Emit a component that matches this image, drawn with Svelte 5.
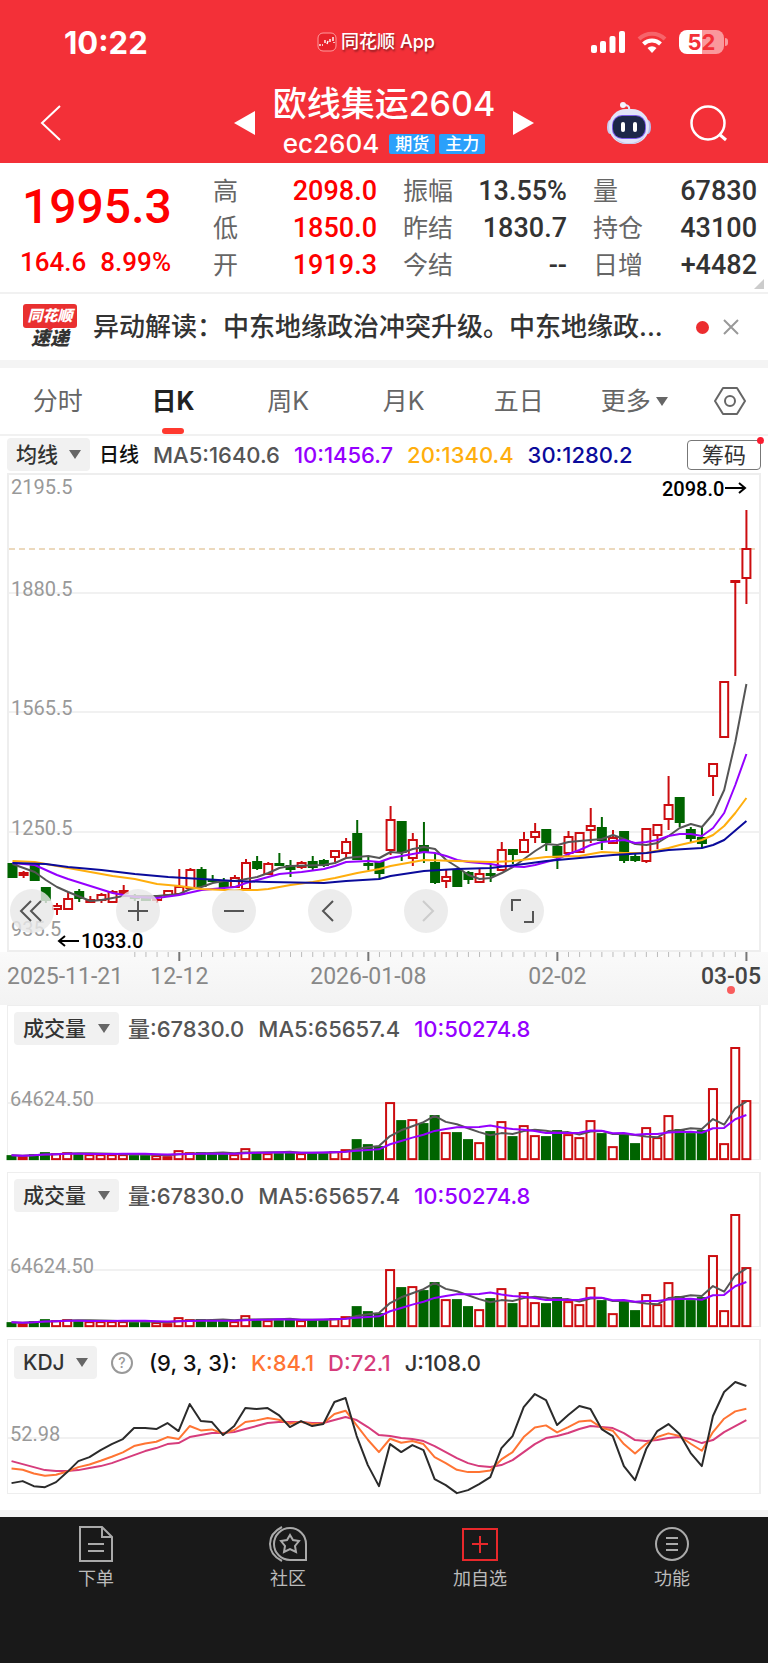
<script lang="ts">
	type Candle = [dir: 'u' | 'd', top: number, bottom: number, high: number, low: number];

	const step = 11.12;
	const x = (i: number) => 3.5 + i * step;

	// body top, body bottom, wick top, wick bottom
	const candles: Candle[] = [
		['d', 864, 877, 864, 878], ['u', 873, 875, 871, 878], ['d', 864, 880, 863, 881], ['d', 888, 900, 888, 903],
		['u', 906, 909, 903, 915], ['u', 899, 909, 892, 909], ['d', 892, 898, 889, 902], ['u', 900, 902, 896, 903],
		['u', 895, 900, 893, 903], ['u', 892, 902, 890, 902], ['u', 891, 893, 885, 894], ['d', 896, 898, 894, 901],
		['d', 897, 900, 896, 901], ['u', 897, 900, 895, 903], ['u', 891, 895, 891, 895], ['u', 887, 894, 869, 894],
		['u', 870, 888, 868, 888], ['d', 870, 886, 867, 887], ['d', 880, 881, 875, 882], ['d', 883, 887, 878, 889],
		['u', 878, 887, 875, 887], ['u', 863, 889, 859, 889], ['d', 862, 868, 856, 870], ['u', 864, 874, 862, 874],
		['d', 864, 865, 853, 866], ['d', 866, 869, 860, 877], ['u', 863, 867, 861, 869], ['d', 862, 867, 856, 870],
		['d', 861, 865, 859, 867], ['u', 851, 857, 851, 862], ['u', 842, 853, 838, 858], ['d', 834, 859, 820, 859],
		['d', 864, 865, 857, 870], ['d', 862, 873, 862, 879], ['u', 820, 850, 806, 855], ['d', 822, 852, 822, 861],
		['u', 840, 858, 833, 866], ['d', 846, 851, 822, 863], ['d', 863, 882, 853, 884], ['u', 877, 881, 869, 888],
		['d', 870, 886, 870, 886], ['d', 873, 879, 871, 884], ['u', 874, 882, 868, 883], ['d', 874, 875, 864, 882],
		['u', 850, 870, 842, 870], ['d', 850, 854, 850, 864], ['u', 840, 852, 832, 852], ['u', 832, 837, 823, 843],
		['d', 830, 842, 830, 851], ['d', 847, 857, 844, 869], ['u', 837, 853, 831, 857], ['u', 833, 852, 833, 852],
		['u', 826, 830, 808, 843], ['d', 828, 840, 817, 850], ['u', 838, 843, 830, 843], ['d', 832, 860, 832, 863],
		['d', 857, 860, 853, 862], ['u', 829, 861, 829, 863], ['u', 825, 835, 825, 849], ['u', 805, 819, 776, 830],
		['d', 798, 822, 798, 827], ['d', 830, 838, 827, 843], ['d', 838, 843, 826, 848], ['u', 764, 776, 764, 796],
		['u', 682, 737, 682, 737], ['u', 581, 582, 581, 676], ['u', 549, 578, 510, 604]
	];

	// [index, y] pairs, straight segments in between
	const averages: { color: string; points: number[][] }[] = [
		{
			color: '#555555',
			points: [[0, 864], [2, 872], [3, 880], [4, 887], [5, 892], [7, 901], [8, 900], [10, 896], [12, 896], [13, 896], [15, 894], [16, 889], [17, 887], [18, 883], [19, 881], [20, 881], [22, 877], [23, 873], [24, 868], [25, 866], [28, 865], [29, 863], [30, 858], [32, 856], [33, 858], [34, 852], [35, 853], [36, 849], [37, 847], [38, 849], [39, 860], [40, 867], [41, 875], [42, 879], [43, 878], [44, 873], [45, 867], [46, 859], [47, 851], [48, 844], [49, 845], [50, 842], [51, 841], [53, 839], [54, 835], [55, 839], [56, 844], [57, 845], [58, 843], [59, 836], [60, 828], [61, 824], [62, 827], [63, 814], [64, 790], [65, 742], [66, 684]]
		},
		{
			color: '#9500ff',
			points: [[0, 863], [2, 865], [4, 875], [5, 879], [7, 886], [9, 893], [11, 897], [13, 898], [15, 895], [17, 890], [20, 887], [21, 883], [23, 877], [24, 874], [26, 872], [28, 869], [29, 866], [30, 862], [32, 861], [33, 862], [34, 858], [35, 856], [37, 852], [38, 853], [39, 856], [40, 860], [41, 862], [43, 864], [44, 866], [46, 867], [47, 865], [48, 862], [49, 859], [50, 854], [51, 850], [52, 845], [53, 842], [55, 840], [56, 843], [57, 842], [58, 840], [59, 836], [60, 834], [61, 834], [62, 836], [63, 828], [64, 813], [65, 785], [66, 754]]
		},
		{
			color: '#ffae0d',
			points: [[0, 861], [2, 862], [3, 864], [5, 868], [7, 872], [9, 876], [11, 879], [13, 884], [15, 886], [17, 889], [19, 890], [22, 890], [23, 889], [25, 885], [27, 882], [29, 878], [31, 873], [33, 869], [34, 866], [36, 862], [37, 860], [40, 861], [43, 862], [45, 861], [48, 857], [51, 856], [53, 852], [55, 853], [57, 853], [59, 848], [60, 845], [62, 840], [63, 835], [64, 826], [65, 813], [66, 798]]
		},
		{
			color: '#0b0b9b',
			points: [[0, 863], [3, 864], [5, 867], [8, 870], [11, 874], [14, 877], [17, 879], [20, 881], [23, 882], [28, 883], [30, 881], [33, 879], [34, 876], [37, 871], [40, 869], [43, 868], [46, 864], [48, 861], [51, 858], [54, 855], [57, 853], [59, 850], [62, 848], [63, 845], [64, 840], [66, 821]]
		}
	];

	const volumes = [
		5, 4, 6, 8, 7, 8, 6, 6, 6, 6, 6, 5, 5, 5, 4, 10, 8, 8, 6, 6, 6, 12, 8, 7, 7, 8, 7, 8, 7, 9, 11, 21, 16, 14,
		58, 40, 41, 37, 45, 28, 28, 21, 18, 29, 39, 24, 35, 25, 24, 30, 26, 23, 40, 27, 14, 27, 17, 33, 23, 45, 31,
		27, 30, 72, 17, 113, 60
	];

	const lineJ = [
		182, 180, 185, 186, 181, 171, 160, 156, 149, 143, 138, 127, 127, 128, 122, 130, 103, 120, 121, 134, 125, 107,
		108, 107, 114, 126, 120, 125, 123, 101, 97, 135, 164, 185, 143, 151, 144, 149, 178, 184, 192, 189, 183, 176,
		147, 135, 106, 93, 99, 124, 114, 105, 108, 128, 135, 165, 179, 148, 130, 123, 133, 152, 165, 115, 91, 81, 85
	];
	const lineD = [
		160, 163, 166, 169, 170, 170, 169, 167, 165, 162, 158, 154, 150, 147, 143, 142, 136, 134, 132, 132, 131, 128,
		125, 122, 121, 121, 121, 122, 122, 119, 116, 119, 126, 134, 135, 137, 138, 140, 145, 151, 157, 162, 165, 166,
		164, 159, 151, 143, 137, 135, 132, 128, 125, 126, 127, 132, 139, 140, 139, 137, 136, 138, 142, 139, 131, 125, 119
	];
	// J = 3K - 2D
	const lineK = lineJ.map((j, i) => (j + 2 * lineD[i]) / 3);

	const toPoints = (pairs: number[][]) => pairs.map(([i, y]) => `${x(i)},${y}`).join(' ');
	const series = (values: number[]) => toPoints(values.map((v, i) => [i, v]));

	function movingAverage(values: number[], n: number): number[] {
		return values.map((_, i) => {
			const part = values.slice(Math.max(0, i - n + 1), i + 1);
			return part.reduce((a, b) => a + b, 0) / part.length;
		});
	}

	const volumeMa5 = series(movingAverage(volumes, 5).map((v) => 114 - v));
	const volumeMa10 = series(movingAverage(volumes, 10).map((v) => 114 - v));

	const quotes = [
		[['高', '2098.0'], ['低', '1850.0'], ['开', '1919.3']],
		[['振幅', '13.55%'], ['昨结', '1830.7'], ['今结', '--']],
		[['量', '67830'], ['持仓', '43100'], ['日增', '+4482']]
	];

	const tabs = ['分时', '日K', '周K', '月K', '五日'];
	let activeTab = $state('日K');

	const ticks = Array.from({ length: 56 }, (_, k) => k + 11);
	const majorTicks = [15, 32, 49, 66];
</script>

<main>
	<header>
		<div class="status">
			<span class="time">10:22</span>
			<span class="app-name">
				<svg width="20" height="20" viewBox="0 0 20 20" aria-hidden="true">
					<rect x="1" y="1" width="18" height="18" rx="5" fill="#e8222b" stroke="#ff9a9c" />
					<path d="M3 14v-2M5 13h1M8 11V8M10 12l1-3M13 10V7M16 9V5M17 11v-1" stroke="#fff" stroke-width="1.4" fill="none" />
				</svg>
				同花顺 App
			</span>
			<div class="status-icons">
				<svg width="34" height="24" viewBox="0 0 34 24" fill="#fff" aria-hidden="true">
					<rect y="15" width="6" height="8" rx="2" />
					<rect x="9" y="11" width="6" height="12" rx="2" />
					<rect x="18.5" y="6" width="6" height="17" rx="2" />
					<rect x="28" y="1" width="6" height="22" rx="2" />
				</svg>
				<svg width="30" height="24" viewBox="0 0 30 24" fill="none" stroke="#fff" aria-hidden="true">
					<path d="M2 9a18.5 18.5 0 0 1 26 0" stroke-width="4" opacity=".25" />
					<path d="M6.5 14a12 12 0 0 1 17 0" stroke-width="4" />
					<path d="M15 23l-4.5-5a6.5 6.5 0 0 1 9 0z" fill="#fff" stroke="none" />
				</svg>
				<span class="battery"><b>5</b><b>2</b></span>
			</div>
		</div>
		<div class="title-bar">
			<button class="back" aria-label="返回">
				<svg width="22" height="38" viewBox="0 0 22 38" fill="none" stroke="#fff" stroke-width="2">
					<path d="M20 2L2 19l18 17" />
				</svg>
			</button>
			<div class="contract">
				<button aria-label="上一个">
					<svg width="21" height="24" viewBox="0 0 21 24" fill="#fff"><path d="M21 0v24L0 12z" /></svg>
				</button>
				<div class="names">
					<h1>欧线集运2604</h1>
					<div class="code">
						<span>ec2604</span>
						<span class="badge">期货</span>
						<span class="badge">主力</span>
					</div>
				</div>
				<button aria-label="下一个">
					<svg width="21" height="24" viewBox="0 0 21 24" fill="#fff"><path d="M0 0v24l21-12z" /></svg>
				</button>
			</div>
			<div class="actions">
				<button aria-label="助手">
					<svg width="46" height="44" viewBox="0 0 46 44">
						<path d="M23 9c1-4-2-5-5-5" fill="none" stroke="#e4e6fa" stroke-width="2" />
						<circle cx="17" cy="4" r="3" fill="#f4f4ff" />
						<ellipse cx="4" cy="26" rx="3" ry="7" fill="#c9cdf0" />
						<ellipse cx="42" cy="26" rx="3" ry="7" fill="#b9bcea" />
						<rect x="3" y="8" width="40" height="35" rx="17" fill="#e2e4f8" />
						<path d="M7 34c8 11 24 11 32 0-3 6-8 9-16 9s-13-3-16-9z" fill="#c3c6ea" />
						<rect x="6" y="14" width="34" height="24" rx="10" fill="#7a5be8" />
						<rect x="7" y="15" width="32" height="22" rx="9" fill="#1c2748" />
						<rect x="15" y="21" width="4" height="10" rx="2" fill="#fff" />
						<rect x="27" y="21" width="4" height="10" rx="2" fill="#fff" />
					</svg>
				</button>
				<button aria-label="搜索">
					<svg width="38" height="38" viewBox="0 0 38 38" fill="none" stroke="#fff" stroke-width="2.5">
						<circle cx="18" cy="19" r="16.5" />
						<path d="M29 30l7 6" stroke-width="3" />
					</svg>
				</button>
			</div>
		</div>
	</header>

	<section class="quote">
		<div class="last">
			<strong>1995.3</strong>
			<div><span>164.6</span><span>8.99%</span></div>
		</div>
		{#each quotes as column, c}
			<dl class:up={c === 0}>
				{#each column as [label, value]}
					<div>
						<dt>{label}</dt>
						<dd>{value}</dd>
					</div>
				{/each}
			</dl>
		{/each}
		<i class="corner"></i>
	</section>

	<section class="news">
		<div class="news-logo">
			<span class="tag">同花顺</span>
			<span class="sub">速递</span>
		</div>
		<a href="#news">异动解读：中东地缘政治冲突升级。中东地缘政...</a>
		<i class="dot"></i>
		<button aria-label="关闭">
			<svg width="16" height="16" viewBox="0 0 16 16" stroke="#999" stroke-width="2"><path d="M1 1l14 14M15 1L1 15" /></svg>
		</button>
	</section>

	<nav class="tabs">
		{#each tabs as tab}
			<button class:active={activeTab === tab} onclick={() => (activeTab = tab)}>{tab}</button>
		{/each}
		<button>更多<i class="caret"></i></button>
		<button class="settings" aria-label="设置">
			<svg width="32" height="30" viewBox="0 0 32 30" fill="none" stroke="#666" stroke-width="2">
				<path d="M9 2h14l8 13-8 13H9L1 15z" stroke-linejoin="round" />
				<circle cx="16" cy="15" r="5" />
			</svg>
		</button>
	</nav>

	<div class="legend">
		<label class="picker">
			<select aria-label="主图指标"><option>均线</option></select>
			<i class="caret"></i>
		</label>
		<b class="period">日线</b>
		<span>MA5:1640.6</span>
		<span class="purple">10:1456.7</span>
		<span class="orange">20:1340.4</span>
		<span class="navy">30:1280.2</span>
		<button class="chips">筹码</button>
	</div>

	<section class="panel">
		<svg viewBox="0 475 750 475" role="img" aria-label="日K">
			<g class="grid">
				<path d="M0 593h750M0 712h750M0 832h750" />
				<path class="last-line" d="M0 549h750" />
			</g>
			<g class="scale">
				<text x="2" y="494">2195.5</text>
				<text x="2" y="596">1880.5</text>
				<text x="2" y="715">1565.5</text>
				<text x="2" y="835">1250.5</text>
				<text x="2" y="936">935.5</text>
			</g>
			{#each candles as [dir, top, bottom, high, low], i}
				<g class={dir === 'u' ? 'rise' : 'fall'}>
					{#if high < top}<path d="M{x(i)} {high}V{top}" />{/if}
					{#if low > bottom}<path d="M{x(i)} {bottom}V{low}" />{/if}
					<rect x={x(i) - 4} y={top} width="8" height={bottom - top} />
				</g>
			{/each}
			{#each averages as { color, points }}
				<polyline points={toPoints(points)} stroke={color} />
			{/each}
			<g class="mark">
				<text x="653" y="496">2098.0</text>
				<path d="M716 488h20M730 483l6 5-6 5" />
				<text x="72" y="948">1033.0</text>
				<path d="M70 941H50M56 936l-6 5 6 5" />
			</g>
		</svg>
		<div class="tools">
			<button aria-label="最早">
				<svg viewBox="0 0 44 44"><path d="M31 12L21 22l10 10M21 12L11 22l10 10" /></svg>
			</button>
			<button aria-label="放大">
				<svg viewBox="0 0 44 44"><path d="M12 22h20M22 12v20" /></svg>
			</button>
			<button aria-label="缩小">
				<svg viewBox="0 0 44 44"><path d="M12 22h20" /></svg>
			</button>
			<button aria-label="左移">
				<svg viewBox="0 0 44 44"><path d="M25 12L15 22l10 10" /></svg>
			</button>
			<button aria-label="右移" disabled>
				<svg viewBox="0 0 44 44"><path d="M19 12l10 10-10 10" /></svg>
			</button>
			<button aria-label="全屏">
				<svg viewBox="0 0 44 44"><path d="M12 22V11h9M33 22v11h-9" /></svg>
			</button>
		</div>
	</section>

	<div class="axis">
		<svg viewBox="0 0 750 53" role="img" aria-label="日期">
			{#each ticks as i}
				<path class:major={majorTicks.includes(i)} d="M{x(i)} 0v{majorTicks.includes(i) ? 9 : 5}" />
			{/each}
			<text x="-2" y="32">2025-11-21</text>
			<text x={x(15)} y="32" text-anchor="middle">12-12</text>
			<text x={x(32)} y="32" text-anchor="middle">2026-01-08</text>
			<text x={x(49)} y="32" text-anchor="middle">02-02</text>
			<text class="current" x="752" y="32" text-anchor="end">03-05</text>
			<circle cx="722" cy="38" r="4" />
		</svg>
	</div>

	{#each [1, 2] as pane}
		<section class="panel sub-panel">
			<div class="legend">
				<label class="picker wide">
					<select aria-label="副图指标{pane}"><option>成交量</option></select>
					<i class="caret"></i>
				</label>
				<span>量:67830.0</span>
				<span>MA5:65657.4</span>
				<span class="purple">10:50274.8</span>
			</div>
			<svg viewBox="0 0 750 114" role="img" aria-label="成交量">
				<path class="grid" d="M0 57h750" />
				<text class="scale" x="2" y="60">64624.50</text>
				{#each volumes as v, i}
					<rect class={candles[i][0] === 'u' ? 'rise' : 'fall'} x={x(i) - 4} y={115 - v} width="8" height={v - 2} />
				{/each}
				<polyline points={volumeMa5} stroke="#555555" />
				<polyline points={volumeMa10} stroke="#9500ff" />
			</svg>
		</section>
	{/each}

	<section class="panel sub-panel">
		<div class="legend">
			<label class="picker">
				<select aria-label="副图指标3"><option>KDJ</option></select>
				<i class="caret"></i>
			</label>
			<button class="help" aria-label="说明">?</button>
			<b>(9, 3, 3):</b>
			<span class="k">K:84.1</span>
			<span class="d">D:72.1</span>
			<span class="j">J:108.0</span>
		</div>
		<svg viewBox="0 79 750 114" role="img" aria-label="KDJ">
			<path class="grid" d="M0 137h750" />
			<text class="scale" x="2" y="140">52.98</text>
			<polyline points={series(lineD)} stroke="#d63c7c" />
			<polyline points={series(lineK)} stroke="#ff7433" />
			<polyline points={series(lineJ)} stroke="#2b2b2b" />
		</svg>
	</section>

	<nav class="bottom">
		<a href="#order">
			<svg viewBox="0 0 40 36">
				<path d="M4 1h22l10 10v24H4zM26 1v10h10M12 18h16M12 25h16" />
			</svg>
			下单
		</a>
		<a href="#community">
			<svg viewBox="0 0 40 36">
				<path d="M22 2a16 16 0 0 1 16 16v16H22a16 16 0 0 1 0-32zM14 1C-2 9-2 27 14 35" />
				<path d="M22 9l3 5 6 1-4 5 1 6-6-3-6 3 1-6-4-5 6-1z" />
			</svg>
			社区
		</a>
		<a href="#watch" class="add">
			<svg viewBox="0 0 40 36"><path d="M3 3h34v31H3zM20 10v17M12 18h16" /></svg>
			加自选
		</a>
		<a href="#more">
			<svg viewBox="0 0 40 36">
				<circle cx="20" cy="18" r="16" />
				<path d="M14 12h12M14 18h12M14 24h12" />
			</svg>
			功能
		</a>
	</nav>
</main>

<style>
	:global(body) {
		margin: 0;
		background: #191919;
	}

	main {
		background: #fff;
		color: #333;
		font-family: Inter, 'Noto Sans CJK SC', sans-serif;
	}

	button,
	select {
		border: 0;
		padding: 0;
		background: none;
		color: inherit;
		font: inherit;
		cursor: pointer;
	}

	svg {
		display: block;
	}

	header {
		background: #f33038;
		color: #fff;
	}

	.status {
		display: grid;
		grid-template-columns: 1fr auto 1fr;
		align-items: center;
		height: 84px;
		padding: 0 44px 0 64px;
	}

	.time {
		font-size: 31px;
		font-weight: 700;
	}

	.app-name {
		display: flex;
		align-items: center;
		gap: 4px;
		margin-right: 36px;
		font-size: 18px;
		font-weight: 500;
		line-height: 24px;
		text-shadow: 1px 2px 2px rgba(0, 0, 0, 0.4);
	}

	.status-icons {
		display: flex;
		justify-content: flex-end;
		align-items: center;
		gap: 12px;
	}

	.battery {
		position: relative;
		display: flex;
		justify-content: center;
		width: 45px;
		height: 24px;
		border-radius: 8px;
		background: linear-gradient(90deg, #fff 52%, #fa989c 52%);
		color: #f33038;
		font-size: 22px;
		line-height: 24px;
	}

	.battery::after {
		content: '';
		position: absolute;
		top: 8px;
		right: -4px;
		width: 3px;
		height: 8px;
		border-radius: 0 4px 4px 0;
		background: #fa989c;
	}

	.title-bar {
		display: grid;
		grid-template-columns: 1fr auto 1fr;
		align-items: center;
		height: 74px;
		padding: 0 40px 5px;
	}

	.back {
		justify-self: start;
	}

	.contract {
		display: flex;
		align-items: center;
		gap: 18px;
	}

	.names {
		text-align: center;
	}

	h1 {
		margin: 0 0 2px;
		font-size: 34px;
		font-weight: 500;
		line-height: 40px;
		white-space: nowrap;
	}

	.code {
		display: flex;
		justify-content: center;
		align-items: center;
		gap: 4px;
		font-size: 26px;
		font-weight: 500;
		line-height: 36px;
	}

	.badge {
		padding: 0 6px;
		border-radius: 2px;
		background: #2ba0fb;
		font-size: 17px;
		line-height: 20px;
	}

	.code span:first-child {
		margin-right: 6px;
	}

	.actions {
		display: flex;
		justify-content: flex-end;
		align-items: center;
		gap: 38px;
	}

	.quote {
		position: relative;
		display: grid;
		grid-template-columns: 1fr repeat(3, 164px);
		column-gap: 26px;
		padding: 10px 11px 8px 20px;
		border-bottom: 2px solid #f1f1f1;
		font-family: Roboto, 'Noto Sans CJK SC', sans-serif;
	}

	.last {
		color: #fe0000;
		font-size: 26px;
		font-weight: 500;
		white-space: nowrap;
	}

	.last strong {
		display: block;
		font-size: 48px;
		font-weight: 500;
		line-height: 68px;
		padding-left: 2px;
	}

	.last div {
		display: flex;
		gap: 14px;
		line-height: 42px;
	}

	dl {
		margin: 0;
	}

	dl div {
		display: flex;
		justify-content: space-between;
		height: 37px;
		line-height: 37px;
	}

	dt {
		color: #666;
		font-size: 25px;
	}

	dd {
		margin: 0;
		font-size: 27px;
		font-weight: 500;
	}

	.up dd {
		color: #fe0000;
	}

	.corner {
		position: absolute;
		right: 4px;
		bottom: 3px;
		border: 5px solid transparent;
		border-right-color: #ccc;
		border-bottom-color: #ccc;
	}

	.news {
		display: flex;
		align-items: center;
		height: 66px;
		padding: 0 29px 0 23px;
		border-bottom: 8px solid #f4f4f4;
	}

	.news a {
		flex: 1;
		min-width: 0;
		margin-left: 16px;
		overflow: hidden;
		color: #333;
		font-size: 26px;
		font-weight: 500;
		line-height: 36px;
		white-space: nowrap;
		text-decoration: none;
	}

	.news-logo {
		display: flex;
		flex-direction: column;
		align-items: center;
		width: 54px;
		font-style: italic;
		font-weight: 900;
	}

	.tag {
		position: relative;
		width: 100%;
		border-radius: 3px;
		background: #e93030;
		color: #fff;
		font-size: 15px;
		line-height: 24px;
		text-align: center;
	}

	.tag::after {
		content: '';
		position: absolute;
		top: 23px;
		left: 23px;
		border: 4px solid transparent;
		border-top-color: #e93030;
	}

	.sub {
		font-size: 19px;
		line-height: 22px;
	}

	.dot {
		width: 13px;
		height: 13px;
		margin: 0 14px 0 12px;
		border-radius: 50%;
		background: #ec2d2f;
	}

	.tabs {
		display: flex;
		height: 66px;
		border-bottom: 2px solid #f1f1f1;
		color: #666;
		font-size: 25px;
		line-height: 32px;
	}

	.tabs button {
		position: relative;
		display: flex;
		flex: 115;
		align-items: center;
		justify-content: center;
		gap: 5px;
	}

	.tabs .settings {
		flex: 76;
	}

	.tabs .active {
		color: #222;
		font-weight: 700;
	}

	.tabs .active::after {
		content: '';
		position: absolute;
		bottom: 0;
		width: 22px;
		height: 6px;
		border-radius: 3px;
		background: #ff392f;
	}

	.caret {
		width: 0;
		border: 6px solid transparent;
		border-top: 9px solid #666;
		border-bottom: 0;
	}

	.legend {
		display: flex;
		align-items: center;
		gap: 14px;
		height: 37px;
		padding: 0 7px;
		color: #555;
		font-size: 22px;
		font-weight: 500;
		line-height: 30px;
		white-space: nowrap;
	}

	.legend b {
		color: #111;
		font-weight: 500;
	}

	.legend .period {
		font-size: 20px;
	}

	.picker {
		position: relative;
		display: flex;
		align-items: center;
		width: 83px;
		height: 33px;
		margin-right: -5px;
		border-radius: 4px;
		background: #f1f1f1;
		color: #333;
		font-size: 21px;
	}

	.picker.wide {
		width: 105px;
	}

	.picker select {
		width: 100%;
		height: 100%;
		padding-left: 9px;
		appearance: none;
	}

	.picker .caret {
		position: absolute;
		right: 9px;
		pointer-events: none;
	}

	.purple {
		color: #9500ff;
	}

	.orange {
		color: #ffae0d;
	}

	.navy {
		color: #0b0b9b;
	}

	.chips {
		position: relative;
		width: 74px;
		height: 30px;
		margin-left: auto;
		border: 1px solid #777;
		border-radius: 4px;
		color: #333;
		font-weight: 400;
		line-height: 28px;
	}

	.chips::after {
		content: '';
		position: absolute;
		top: -4px;
		right: -4px;
		width: 7px;
		height: 7px;
		border-radius: 50%;
		background: #fb1b2f;
	}

	.panel {
		position: relative;
		margin: 0 7px;
		border: 2px solid #eee;
	}

	.panel > svg,
	.axis svg {
		width: 100%;
		overflow: visible;
	}

	.sub-panel {
		margin-bottom: 12px;
		border-width: 1px 2px 1px 1px;
	}

	.sub-panel .legend {
		height: 40px;
		padding: 5px 6px 0;
		box-sizing: border-box;
	}

	.sub-panel > svg {
		margin-bottom: -1px;
	}

	polyline {
		fill: none;
		stroke-width: 2;
		stroke-linejoin: round;
	}

	.grid {
		fill: none;
		stroke: #f1f1f1;
		stroke-width: 2;
	}

	.last-line {
		stroke: #ecd9bd;
		stroke-dasharray: 6 4;
	}

	.scale {
		fill: #999;
		font: 400 20px Roboto, sans-serif;
	}

	.rise {
		fill: #fff;
		stroke: #cc0d10;
		stroke-width: 2;
	}

	.fall {
		fill: #006400;
		stroke: #006400;
		stroke-width: 2;
	}

	.mark {
		fill: #000;
		font: 500 20px Roboto, sans-serif;
	}

	.mark path {
		fill: none;
		stroke: #000;
		stroke-width: 2;
	}

	.tools {
		position: absolute;
		left: 1px;
		bottom: 17px;
		display: flex;
		gap: 52px;
	}

	.tools button {
		width: 44px;
		height: 44px;
		border-radius: 50%;
		background: rgba(232, 232, 232, 0.82);
	}

	.tools button:first-child {
		margin-right: 10px;
	}

	.tools path {
		fill: none;
		stroke: #555;
		stroke-width: 2;
	}

	.tools button:disabled path {
		stroke: #ccc;
	}

	.axis {
		padding: 0 9px;
		background: linear-gradient(#fafafa, #f3f3f3);
	}

	.axis path {
		stroke: #bbb;
		stroke-width: 1;
	}

	.axis .major {
		stroke: #777;
		stroke-width: 2;
	}

	.axis text {
		fill: #888;
		font: 400 23px Roboto, sans-serif;
	}

	.axis .current {
		fill: #444;
		font-weight: 500;
	}

	.axis circle {
		fill: #f95d5d;
	}

	.help {
		width: 22px;
		height: 22px;
		margin: 0 2px 0 5px;
		border: 2px solid #999;
		border-radius: 50%;
		color: #999;
		font-size: 14px;
		line-height: 16px;
	}

	.k {
		color: #ff7433;
	}

	.d {
		color: #d63c7c;
	}

	.j {
		color: #333;
	}

	.bottom {
		display: grid;
		grid-template-columns: repeat(4, 1fr);
		margin-top: 16px;
		padding: 9px 0 72px;
		border-top: 7px solid #f4f4f4;
		background: #191919;
		background-clip: padding-box;
	}

	.bottom a {
		display: flex;
		flex-direction: column;
		align-items: center;
		gap: 4px;
		color: #bbb;
		font-size: 18px;
		line-height: 26px;
		text-decoration: none;
	}

	.bottom svg {
		width: 40px;
		height: 36px;
		fill: none;
		stroke: #aaa;
		stroke-width: 2;
	}

	.bottom .add svg {
		stroke: #e8282b;
	}
</style>
